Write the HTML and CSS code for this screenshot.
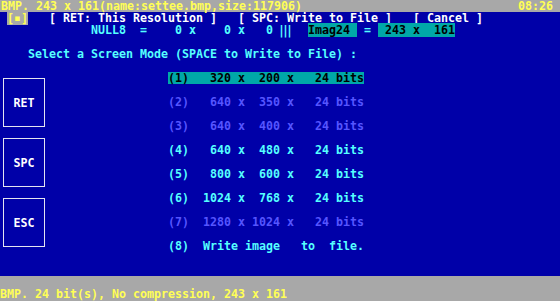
FILE: index.html
```html
<!DOCTYPE html>
<html>
<head>
<meta charset="utf-8">
<link rel="stylesheet" href="styles.css">
</head>
<body>
<div class="screen">
  <div class="topbar">
    <span>BMP. 243 x 161(name:settee.bmp,size:117906)</span>
    <span>08:26</span>
  </div>
  <div class="row header"> <span class="sysbox">[▪]</span>   [ RET: This Resolution ]   [ SPC: Write to File ]   [ Cancel ]</div>
  <div class="row info">             NULL8  =    0 x    0 x   0 <span class="bars">|||</span> <span class="sel">Imag24 </span> = <span class="sel"> 243 x  161</span></div>
  <div class="row"></div>
  <div class="row prompt">    Select a Screen Mode (SPACE to Write to File) :</div>
  <div class="row"></div>
  <div class="main">
    <div class="keys">
      <div class="key">RET</div>
      <div class="key">SPC</div>
      <div class="key">ESC</div>
    </div>
    <div class="menu">
      <div class="item current">(1)   320 x  200 x   24 bits</div>
      <div class="item off">(2)   640 x  350 x   24 bits</div>
      <div class="item off">(3)   640 x  400 x   24 bits</div>
      <div class="item">(4)   640 x  480 x   24 bits</div>
      <div class="item">(5)   800 x  600 x   24 bits</div>
      <div class="item">(6)  1024 x  768 x   24 bits</div>
      <div class="item off">(7)  1280 x 1024 x   24 bits</div>
      <div class="item">(8)  Write image   to  file.</div>
    </div>
  </div>
  <div class="statusbar">
    <div class="row"></div>
    <div class="row status">BMP. 24 bit(s), No compression, 243 x 161</div>
  </div>
</div>
</body>
</html>
```
FILE: styles.css
```css
html, body {
  margin: 0;
  padding: 0;
  background: #0000a8;
}
.screen {
  width: 560px;
  height: 301px;
  overflow: hidden;
  background: #0000a8;
  font-family: "DejaVu Sans Mono", monospace;
  font-weight: bold;
  font-size: 11.63px;
  line-height: 12px;
  display: flex;
  flex-direction: column;
}
.row {
  height: 12px;
  white-space: pre;
}
.topbar {
  height: 12px;
  background: #a8a8a8;
  color: #ffff55;
  display: flex;
  justify-content: space-between;
  padding-left: 1px;
  padding-right: 7px;
  white-space: pre;
}
.header {
  color: #ffffff;
}
.sysbox {
  background: #a8a8a8;
  color: #ffff55;
}
.info {
  color: #55ffff;
}
.bars {
  display: inline-block;
  width: 21px;
  letter-spacing: -3px;
  text-indent: -2px;
  vertical-align: top;
}
.sel {
  background: #00a8a8;
  color: #000000;
}
.prompt {
  color: #55ffff;
}
.main {
  display: flex;
  height: 204px;
}
.keys {
  width: 165px;
  padding-left: 3px;
  padding-top: 6px;
  display: flex;
  flex-direction: column;
  gap: 11px;
}
.key {
  width: 40px;
  height: 47px;
  border: 1px solid #e4e4f0;
  color: #ffffff;
  display: flex;
  align-items: center;
  justify-content: center;
}
.menu {
  display: flex;
  flex-direction: column;
  gap: 12px;
}
.item {
  height: 12px;
  white-space: pre;
  color: #55ffff;
}
.item.current {
  background: #00a8a8;
  color: #000000;
}
.item.off {
  color: #5555ff;
}
.statusbar {
  background: #a8a8a8;
  flex: 1;
}
.status {
  color: #ffff55;
}
```
